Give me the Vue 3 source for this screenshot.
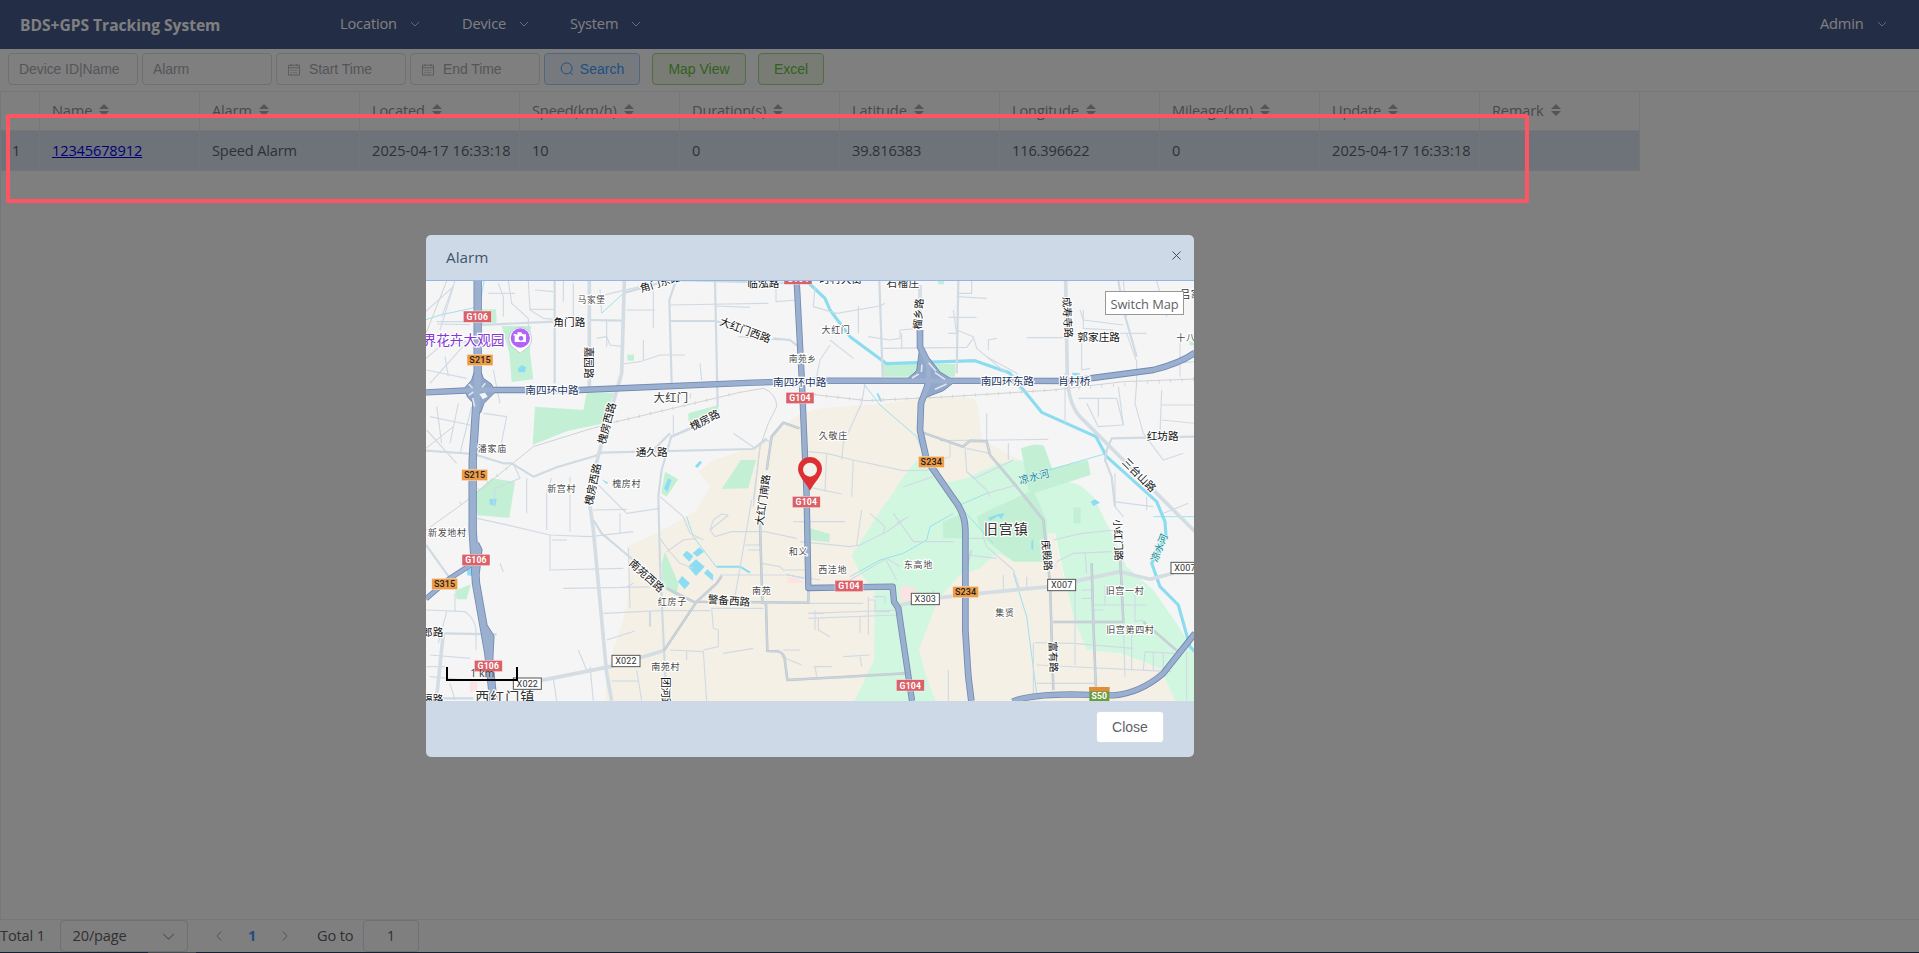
<script setup>
const menus = [
  { label: 'Location', cls: 'm1' },
  { label: 'Device', cls: 'm2' },
  { label: 'System', cls: 'm3' },
]
const columns = ['', 'Name', 'Alarm', 'Located', 'Speed(km/h)', 'Duration(s)', 'Latitude', 'Longitude', 'Mileage(km)', 'Update', 'Remark']
const row = ['1', '12345678912', 'Speed Alarm', '2025-04-17 16:33:18', '10', '0', '39.816383', '116.396622', '0', '2025-04-17 16:33:18', '']

// Map geometry: three map units per CSS pixel.
const parks = [
  'M345 530L490 540L500 488L582 488L552 580L440 604L338 645Z',
  'M185 238L228 238L230 278L185 282Z',
  'M245 288L333 288L330 365L340 448L275 456L268 370Z',
  'M215 745L285 755L268 864L172 856L165 790Z',
  'M735 725L775 748L740 800L724 790Z',
  'M962 690L1008 690L985 775L905 777Z',
  'M805 550L895 525L895 570L805 574Z',
  'M622 374H642V392H622Z',
  'M735 965L775 1060L770 1098L728 1070L725 1000Z',
  'M105 1082L152 1063L140 1108L110 1108Z',
  'M1170 895L1230 912L1228 937L1165 930Z',
  'M1388 402L1605 402L1605 440L1388 440Z',
  'M1553 150H1572V163H1555Z',
  'M1803 655Q1850 636 1872 648L1896 715L2004 690L2012 735L1840 790L1825 780Z',
  'M1670 860L1720 835L1840 780L1880 870L1880 995L1780 995L1690 925Z',
  'M1568 875L1630 850V925H1570Z',
  'M1960 832H1982V880H1960Z',
  'M2308 335H2325V346H2308Z',
]
const waters = [
  'M295 415L305 405L318 412L315 427L295 427Z',
  'M825 708L840 692L846 698L832 714Z',
  'M745 745L755 750L742 785L732 775Z',
  'M545 748L565 758L560 762Z',
  'M788 975L800 962L820 978L808 995Z',
  'M818 970L838 952L852 965L832 980Z',
  'M804 1010L828 988L854 1010L828 1038Z',
  'M774 1055L786 1038L810 1060L794 1078Z',
  'M852 1030L862 1018L880 1035L878 1052Z',
  'M208 808L230 806L226 828L210 824Z',
  'M140 1015L158 1018L158 1038L142 1036Z',
  'M2012 815L2025 808L2040 818L2020 828Z',
  'M1704 863L1735 852L1754 850L1744 868L1735 858L1710 872Z',
  'M1834 935L1840 928V962L1834 955Z',
  'M1958 428L1980 430L1976 438L1955 434Z',
]
const hospitals = ['M1440 1070L1485 1070L1488 1112L1440 1112Z', 'M1100 1042L1130 1042L1155 1058L1104 1060Z', 'M150 1355H172V1385H150Z', 'M1900 1000H1912V1015H1900Z']
const minor = [
  'M0 260L100 170', 'M105 153L65 260', 'M50 275H170', 'M52 282L150 284', 'M100 170L60 300', 'M205 190H285', 'M235 160L250 200V260', 'M265 153L275 220L325 265V310',
  'M325 153L330 240L370 265L405 268', 'M330 238H405', 'M345 180L400 185', 'M430 153V215', 'M460 160V260', 'M540 178L545 250', 'M530 200L660 170', 'M700 153V295', 'M620 240H705',
  'M750 225L1045 220', 'M885 228L990 232', 'M1068 153V215L1130 210', 'M1000 160L1065 170', 'M955 320L1080 330', 'M560 270V350', 'M530 325L560 320L570 345L610 350', 'M610 402L660 395L720 375H795',
  'M670 330V390', 'M18 385L60 350L160 330', 'M75 380L85 440', 'M30 460L155 320', 'M20 420L140 445', 'M50 530L65 640', 'M115 520L90 640', 'M155 530L120 670', 'M190 550L260 560L240 660', 'M30 560L150 585', 'M220 420L240 520',
  'M20 600L110 700', 'M760 555V615L840 580', 'M810 505L812 490', 'M940 610L1005 655', 'M1005 655L1040 630L1055 640', 'M840 400L845 450', 'M280 700L300 745L225 775L220 830',
  'M320 745V850', 'M395 745L380 780V900', 'M450 740V905', 'M510 740L620 850L720 835', 'M600 850V910', 'M520 840L620 838', 'M172 865L240 880L390 915L510 920L640 905', 'M390 915V1020L610 1015', 'M240 1000L250 1025', 'M430 1075L620 1072L640 1060',
  'M395 930H440', 'M550 1150L720 1142H870', 'M560 1230L645 1203', 'M475 1260L500 1320', 'M18 1140L135 1145Q165 1165 168 1200V1260', 'M30 1275L150 1285', 'M105 1090V1145', 'M80 1145L55 1240', 'M30 1340L140 1350', 'M90 1360L105 1410', 'M20 1310H75',
  'M400 1345L410 1412', 'M510 1310L520 1412', 'M575 1353H655', 'M650 1320L665 1412', 'M750 1260L850 1265L860 1412', 'M850 1260L895 1250V1200L880 1195L875 1135H1030',
  'M800 1265V1290', 'M625 955L630 1135', 'M600 1072L730 1070', 'M720 925L745 960L780 1000L820 1015', 'M740 965L790 930L830 925', 'M720 800L790 860L810 910L850 930', 'M870 900L925 855M870 900L885 920L935 905L1035 905L1130 925', 'M925 855L905 852L880 870L870 900',
  'M975 945H1020', 'M985 960H1025', 'M1025 1000L1080 1010L1090 1020H1160', 'M995 810L945 1100', 'M1020 650L1000 830', 'M1090 1260H1140', 'M1120 875H1165', 'M900 1035H1100L1200 1050', 'M1085 1280L1145 1305', 'M1165 1150H1210', 'M1185 1140V1200', 'M910 1270L1000 1255',
  'M1165 665L1220 670L1300 690L1450 722L1560 720', 'M1220 670L1215 785', 'M1300 690L1295 800', 'M1160 770L1265 792', 'M1265 690L1270 640L1325 520L1335 460', 'M1185 170L1180 230L1250 250L1380 228L1395 220', 'M1315 228V310', 'M1230 345L1200 390L1190 440', 'M1230 330L1300 385', 'M1410 330L1440 325L1440 300L1500 295',
  'M1445 310V355', 'M1390 355L1640 352L1660 325', 'M1345 320L1410 330', 'M1610 200L1700 205', 'M1585 262H1670', 'M1615 190H1655V153', 'M1610 300L1660 320L1670 355L1760 430', 'M1585 310H1610L1600 240', 'M1705 360V330L1730 325', 'M1700 380L1790 430L1800 480', 'M1820 323H1935', 'M1980 240L1990 270L2110 285', 'M1990 240V295L2080 300', 'M1985 310V420L2010 415', 'M2110 153L2120 260', 'M2180 310L2100 310', 'M1935 430V580', 'M1700 550V630', 'M1560 632L1885 628', 'M2120 310L2150 395V460L2145 520L2170 610', 'M2095 470L2110 585', 'M1975 505L2090 505L2110 585L2035 590L2000 520', 'M2035 505V560', 'M2225 480L2220 610', 'M2225 525H2325', 'M2225 570L2325 580', 'M2170 610L2230 690L2290 670', 'M2250 400L2325 395', 'M2210 153L2240 260', 'M2280 320V440',
  'M1635 650L1640 725L1700 780L1710 800M1640 655L1710 670', 'M1640 725L1665 745L1780 690', 'M1590 640V680L1560 690', 'M1765 640V690', 'M1700 790L1790 765', 'M1140 875H1275', 'M1140 935L1290 950L1320 945L1400 905L1450 870', 'M1325 840L1310 945', 'M1350 850L1395 890L1390 910', 'M1420 850L1480 935H1600', 'M1430 880L1465 860',
  'M1290 1050L1400 985L1440 1010', 'M1395 985L1430 1050', 'M1540 1080V1110', 'M1165 1150L1440 1140M1165 1165L1430 1155', 'M1165 1120H1330', 'M1195 1165V1200L1230 1220', 'M1345 1100V1215M1360 1100H1395V1120M1345 1110H1365V1145H1410', 'M1320 1160V1210', 'M1270 1280L1350 1275', 'M1320 1280L1325 1310', 'M1185 1310L1190 1340M1180 1310H1235',
  'M1645 925H1690L1700 950L1780 1020L1800 1080', 'M1645 975L1730 985', 'M1750 1035V1080', 'M1820 1040V1080', 'M1900 930L1985 910L2085 900', 'M1910 995L1960 970L2075 965', 'M1995 965L2000 1030', 'M1965 1060V1305', 'M1985 1080H2015M1985 1105H2015M2015 1125L2180 1125M2055 1065V1125M2145 1065V1175L2170 1170', 'M2085 730V830L2110 860', 'M2015 1140H2050', 'M1845 1238L1960 1240L2140 1255', 'M1850 1305L2255 1325', 'M1840 1238V1412', 'M1850 1360H2030', 'M2110 1180L2115 1340', 'M2135 1190V1320', 'M2175 1265L2170 1320M2200 1265V1320M2230 1265V1320M2175 1265L2265 1270', 'M2080 815L2200 830', 'M2230 850L2305 820', 'M2180 800V840', 'M2300 1265V1412', 'M1585 1320V1412', 'M1450 770L1540 740',
]
const medium = [
  'M185 285L400 275', 'M404 153V460', 'M508 270L610 272', 'M750 273H885L930 285', 'M1060 325L1110 330L1135 350', 'M885 153L893 530', 'M755 460L748 210L765 160', 'M615 188L750 150L1130 160', 'M18 662L160 672L250 700L275 700L340 740L410 712L525 678L545 668L1000 657L1040 625', 'M755 615L725 720L715 800L720 1000L732 1260L740 1412',
  'M755 620L895 560', 'M18 945L90 1045', 'M520 870L545 910L640 990', 'M690 1145V1190', 'M70 1210L230 1213', 'M18 1405H160', 'M1378 153L1388 440', 'M1615 153L1610 430', 'M2095 153L2110 240L2150 380', 'M2325 620L2075 625L2060 660L2055 690L2075 740L2085 830', 'M1640 1010L1655 960', 'M700 660L750 610',
]
const trunk = [
  'M508 153V470', 'M613 153L605 430L545 640L505 790L520 900L560 1330L575 1412', 'M360 1352L570 1310L730 1262', 'M70 1210L50 1400', 'M1937 153L1942 440Q1945 520 1980 560L2080 660L2210 790L2325 905', 'M1440 1125L1540 1105L1680 1090L1800 1078L1890 1070L2100 1025L2190 1048L2260 1030', 'M1500 165V260',
]
const secondary = [
  'M732 1262L830 1115L890 1060L905 1038', 'M740 1075L820 1115L1165 1118L1166 1080', 'M1020 880L1027 1118L1038 1120L1042 1263L1075 1264Q1095 1270 1095 1295L1102 1350L1280 1340L1460 1330', 'M1500 605L1628 650L1650 632L1700 634L1710 675L1790 770L1870 870L1890 1060L1900 1380', 'M1900 1176H2110L2100 970', 'M2015 1000L2020 1180L2028 1380', 'M1138 595L1090 578L1055 620L1040 720', 'M2170 1175L2280 1270',
]
const highway = [
  { w: 14, d: 'M18 487L170 480L480 480L1000 458L1200 452L1950 453L2200 420Q2280 400 2325 368' },
  { w: 20, d: 'M173 153L173 460L158 690V900L168 1060L205 1270L220 1412' },
  { w: 14, d: 'M168 940L178 960L170 1030M195 1190L214 1220L210 1300' },
  { w: 11, d: 'M18 1106L90 1045L160 1000' },
  { w: 14, d: 'M1130 153L1145 440L1160 800L1165 1074L1418 1070L1422 1115L1435 1135L1476 1412' },
  { w: 15, d: 'M1500 300V350L1525 400L1525 460L1503 520L1500 600L1520 690L1600 805Q1636 850 1636 900V1200L1645 1340L1654 1412' },
  { w: 14, d: 'M1778 1415Q1820 1395 1950 1393L2080 1396Q2160 1390 2230 1330L2325 1210' },
]
const junction = [
  'M163 425L155 450L134 474L142 500L160 520L165 548L182 548L192 520L226 486L214 462L190 445L183 425Z',
  'M1498 362L1490 422L1464 445L1515 458L1510 505L1536 495L1570 482L1606 454L1560 426L1528 385Z',
]
const labels = [
  ['马家堡', 515, 209, 26, 0, 's'], ['角门东路', 720, 158, 31, -17], ['临泓路', 1030, 158, 32, 0], ['时村大街', 1262, 148, 32, 0], ['石榴庄', 1449, 160, 32, 0, 'n'],
  ['角门路', 448, 277, 32, 0], ['嘉园路', 508, 398, 32, 90], ['大红门西路', 976, 300, 32, 20], ['南苑乡', 1148, 385, 26, 0, 's'], ['大红门', 1248, 300, 27, 0, 's'],
  ['南四环中路', 396, 481, 32, 0, 'b'], ['南四环中路', 1139, 457, 32, 0, 'b'], ['南四环东路', 1762, 452, 32, 0, 'b'], ['肖村桥', 1963, 454, 32, 0, 'b'], ['大红门', 753, 502, 34, 0, 'n'],
  ['榴乡路', 1495, 252, 31, -86], ['成寿寺路', 1943, 262, 31, 87], ['郭家庄路', 2036, 321, 32, 0], ['吕家', 2312, 192, 32, 0, 'n'], ['十八', 2298, 322, 27, 0, 's'],
  ['槐房西路', 560, 580, 32, -75], ['槐房西路', 518, 763, 32, -78], ['槐房路', 854, 570, 32, -27], ['通久路', 695, 665, 32, 0], ['潘家庙', 217, 657, 27, 0, 's'], ['新宫村', 425, 777, 27, 0, 's'], ['槐房村', 620, 762, 27, 0, 's'],
  ['久敬庄', 1240, 616, 27, 0, 's'], ['红坊路', 2228, 618, 32, 0], ['三台山路', 2158, 735, 32, 45], ['凉水河', 1842, 740, 31, -15, 'w'], ['凉水河', 2217, 953, 29, -68, 'w'],
  ['新发地村', 82, 908, 27, 0, 's'], ['大红门南路', 1028, 810, 31, -82], ['和义', 1135, 965, 27, 0, 's'], ['西洼地', 1238, 1020, 27, 0, 's'], ['南苑', 1025, 1083, 27, 0, 's'], ['南苑西路', 680, 1037, 32, 42],
  ['红房子', 757, 1116, 27, 0, 's'], ['警备西路', 927, 1112, 32, 4], ['郎路', 38, 1207, 32, 0], ['福路', 38, 1406, 32, 0], ['南苑村', 737, 1311, 27, 0, 's'], ['团河路', 737, 1388, 31, 90], ['西红门镇', 256, 1401, 42, 0, 't'],
  ['东高地', 1495, 1005, 27, 0, 's'], ['旧宫镇', 1759, 895, 42, 0, 't'], ['庑殿路', 1881, 976, 31, 85], ['小红门路', 2095, 930, 31, 88], ['旧宫一村', 2115, 1083, 27, 0, 's'], ['旧宫第四村', 2131, 1199, 27, 0, 's'], ['集贤', 1755, 1149, 27, 0, 's'], ['富有路', 1900, 1281, 31, 88],
  ['世界花卉大观园', 110, 330, 41, 0, 'p'],
]
const shields = [
  ['G106', 172, 260, 'r'], ['S215', 180, 390, 'o'], ['S215', 164, 735, 'o'], ['G104', 1134, 146, 'r'], ['G104', 1140, 504, 'r'], ['S234', 1534, 696, 'o'],
  ['G104', 1159, 816, 'r'], ['G106', 168, 990, 'r'], ['S315', 74, 1062, 'o'], ['G106', 205, 1308, 'r'], ['X022', 322, 1361, 'x'], ['X022', 618, 1293, 'x'],
  ['G104', 1287, 1068, 'r'], ['X303', 1516, 1107, 'x'], ['S234', 1637, 1086, 'o'], ['X007', 1925, 1065, 'x'], ['X007', 2295, 1014, 'x'], ['G104', 1471, 1366, 'r'],
]
</script>

<template>
  <div class="page">
    <header class="topbar">
      <div class="brand">BDS+GPS Tracking System</div>
      <nav class="menu">
        <div v-for="m in menus" :key="m.label" class="menu-item" :class="m.cls">
          <span>{{ m.label }}</span>
          <svg class="chev" viewBox="0 0 10 10"><path d="M1 3L5 7L9 3" /></svg>
        </div>
      </nav>
      <div class="menu-item admin">
        <span>Admin</span>
        <svg class="chev" viewBox="0 0 10 10"><path d="M1 3L5 7L9 3" /></svg>
      </div>
    </header>

    <div class="filters">
      <div class="input">Device ID|Name</div>
      <div class="input">Alarm</div>
      <div v-for="t in ['Start Time', 'End Time']" :key="t" class="input date">
        <svg viewBox="0 0 14 14"><path d="M.5 2H13.5V13.5H.5ZM.5 5H13.5M3.5 .5V3M10.5 .5V3" /><path class="dots" d="M3 8H11M3 10.7H11" /></svg>
        <span>{{ t }}</span>
      </div>
      <button class="btn search">
        <svg viewBox="0 0 14 14"><circle cx="6.6" cy="6.4" r="5.5" /><path d="M10.4 10.4L12.6 12.8" /></svg>
        <span>Search</span>
      </button>
      <button class="btn green mapview">Map View</button>
      <button class="btn green excel">Excel</button>
    </div>

    <main class="table">
      <div class="tr head">
        <div v-for="(c, i) in columns" :key="i" class="td">
          <template v-if="c">
            <span>{{ c }}</span>
            <svg class="sort" viewBox="0 0 10 12"><path d="M0 5L5 0L10 5ZM0 7L5 12L10 7Z" /></svg>
          </template>
        </div>
      </div>
      <div class="tr body">
        <div v-for="(c, i) in row" :key="i" class="td">
          <a v-if="i === 1" href="#">{{ c }}</a>
          <span v-else>{{ c }}</span>
        </div>
      </div>
    </main>

    <footer class="pager">
      <span class="total">Total 1</span>
      <div class="select"><span>20/page</span><svg viewBox="0 0 12 12"><path d="M1 3.5L6 8.5L11 3.5" /></svg></div>
      <svg class="arrow prev" viewBox="0 0 12 12"><path d="M8 1.5L4 6L8 10.5" /></svg>
      <b class="current">1</b>
      <svg class="arrow next" viewBox="0 0 12 12"><path d="M4 1.5L8 6L4 10.5" /></svg>
      <span class="goto">Go to</span>
      <div class="jump">1</div>
    </footer>
    <div class="strip"><i></i></div>

    <div class="overlay">
      <section class="dialog">
        <div class="dialog-head">
          <span>Alarm</span>
          <svg viewBox="0 0 10 10"><path d="M.5 .5L9.5 9.5M9.5 .5L.5 9.5" /></svg>
        </div>
        <div class="map">
          <svg class="canvas" viewBox="18 153 2304 1260" preserveAspectRatio="none">
            <path class="urban" d="M1075 600L1140 552L1200 535L1410 520L1520 500L1660 505L1672 520L1685 628L1800 690L1900 910L1960 1160L2000 1260L2090 1270L2220 1315L2270 1420H555L560 1320L600 1200L620 1130L630 1000L620 950L720 905L830 840L870 770L835 725L880 690L960 665L1030 640Z" />
            <path class="field" d="M1490 690L1450 740L1405 810L1395 820L1350 890L1295 975L1320 1030L1365 1080L1362 1290L1300 1420H1550L1515 1330L1497 1255L1520 1200L1550 1120L1580 1080L1620 1035L1680 1015L1730 970L1780 990L1880 995L1885 910L1905 910L1960 1160L2000 1260L2100 1270L2220 1315L2270 1420H2325V1270L2270 1180L2200 1080L2120 1010L2070 900L2020 800L1980 765L1890 740L1800 690L1740 700L1680 725L1640 745L1570 760Z" />
            <path v-for="(d, i) in parks" :key="'p' + i" class="park" :d="d" />
            <path v-for="(d, i) in hospitals" :key="'h' + i" class="hospital" :d="d" />
            <path v-for="(d, i) in waters" :key="'w' + i" class="water" :d="d" />
            <path class="river r3" d="M0 275L60 255L155 235L180 225L192 153M545 250L610 190M800 860L820 920L890 1012M1330 460L1380 525L1490 620L1530 720L1620 830L1720 940M1290 1040L1380 990L1450 970L1520 930L1530 890L1600 850M1780 1030L1820 1160L1850 1390M1870 725L2060 670M2200 860H2325M1620 825L1700 790M1100 1033L1150 1045" />
            <path class="river r8" d="M890 1010L960 1010L990 1028M1372 490L1384 515" />
            <path class="river r12" d="M1160 153L1215 205L1230 240L1290 320L1400 401L1665 392L1768 428L1865 547L2028 620L2060 680L2210 815L2235 875L2238 920L2195 1000L2220 1070L2275 1125L2310 1250L2325 1265" />
            <path class="rail" d="M18 655L100 590M18 900L130 820L340 650L500 600L590 575L960 487L1030 475Q1070 490 1070 530L1045 580L1020 650L1000 810M1150 490L1340 512L1590 500L1900 480L2110 455L2325 447M80 153L18 310" />
            <path class="tick" d="M120 820L280 700M590 575L960 487M1150 490L1340 512L1590 500L1900 480L2325 447" />
            <path v-for="(d, i) in minor" :key="'m' + i" class="road minor" :d="d" />
            <path v-for="(d, i) in medium" :key="'d' + i" class="road medium" :d="d" />
            <path v-for="(d, i) in trunk" :key="'t' + i" class="road trunk" :d="d" />
            <path v-for="(d, i) in secondary" :key="'sc' + i" class="road sec-case" :d="d" />
            <path v-for="(d, i) in secondary" :key="'sf' + i" class="road sec" :d="d" />
            <path v-for="(h, i) in highway" :key="'hc' + i" class="road hw-case" :d="h.d" :stroke-width="h.w + 5" />
            <path v-for="(d, i) in junction" :key="'j' + i" class="junction" :d="d" />
            <path v-for="(h, i) in highway" :key="'hf' + i" class="road hw" :d="h.d" :stroke-width="h.w" />
            <path class="ramp" d="M146 462L158 474M196 460L186 472M146 496L160 486M158 504L164 530M1496 432L1476 444M1545 428L1575 448M1545 478L1580 462M1506 404L1504 426M1526 398L1548 424" />
            <path class="island" d="M178 492L195 488L203 500L188 508Z" />

            <text v-for="(l, i) in labels" :key="'l' + i" :class="['label', l[5]]" :font-size="l[3]" :transform="`translate(${l[1]} ${l[2]}) rotate(${l[4]})`" dy="0.37em">{{ l[0] }}</text>
            <g v-for="(s, i) in shields" :key="'s' + i" :class="['shield', s[3]]" :transform="`translate(${s[1]} ${s[2]})`">
              <rect :x="s[3] === 'o' ? -39 : -42" y="-17" :width="s[3] === 'o' ? 78 : 84" height="34" />
              <text y="10">{{ s[0] }}</text>
            </g>
            <g class="shield e" transform="translate(2038 1397)">
              <rect x="-30" y="-26" width="60" height="42" />
              <rect class="cap" x="-30" y="-26" width="60" height="13" />
              <text y="9">S50</text>
            </g>

            <g class="poi">
              <path class="poi-ring" d="M301 370L284 356A34 34 0 1 1 318 356Z" />
              <circle class="poi-disc" cx="301" cy="324" r="29" />
              <path class="poi-cam" d="M284 319V336H318V313H308L304 307H295L293 313" />
              <circle class="poi-disc" cx="303" cy="325" r="7" />
              <path class="poi-cam" d="M281 312H290V317H281ZM292 307h5v4h-5z" />
            </g>
            <g class="pin">
              <path d="M1170 782C1156 755 1134 738 1134 716A36 35 0 1 1 1206 716C1206 738 1184 755 1170 782Z" />
              <circle cx="1170" cy="719" r="21" />
            </g>
            <path class="scale" d="M81 1311V1350H291V1311" />
            <text class="scale-text" x="187" y="1341">1 km</text>
          </svg>
          <button class="switch">Switch Map</button>
        </div>
        <div class="dialog-foot"><button class="close">Close</button></div>
      </section>
    </div>
    <div class="highlight"></div>
  </div>
</template>

<style>
body { overflow: hidden; }
</style>
<style scoped>
* { box-sizing: border-box; }
.page { position: relative; width: 1919px; height: 953px; overflow: hidden; display: flex; flex-direction: column; background: #fff; color: #606266; font-family: "Open Sans", "Noto Sans", sans-serif; font-size: 14.6px; letter-spacing: -.15px; }
svg { fill: none; stroke: currentColor; flex: none; }
button { font: inherit; letter-spacing: 0; padding: 0; }
.topbar { height: 49px; flex: none; background: #465b8d; color: #fff; display: flex; align-items: center; padding-left: 20px; padding-right: 32px; }
.brand { width: 320px; font-weight: 700; font-size: 15.6px; letter-spacing: -.02px; white-space: nowrap; }
.menu { display: flex; flex: 1; }
.menu-item { display: flex; align-items: center; justify-content: space-between; padding-bottom: 3px; }
.chev { position: relative; top: 1px; }
.m1 { width: 80px; margin-right: 42px; }
.m2 { width: 67px; margin-right: 41px; }
.m3 { width: 71px; }
.admin { width: 67px; }
.chev { width: 10px; height: 10px; stroke-width: .9; opacity: .8; }
.filters { height: 42px; flex: none; display: flex; align-items: flex-start; gap: 4px; padding: 4px 8px; font: 14px "Liberation Sans", Arial, sans-serif; letter-spacing: -.08px; }
.input { width: 130px; height: 32px; border: 1px solid #dcdfe6; border-radius: 4px; padding-left: 10px; line-height: 31px; color: #a8abb2; white-space: nowrap; }
.date { display: flex; align-items: center; padding-left: 11px; }
.date svg { width: 12px; height: 13px; margin-right: 9px; }
.dots { stroke-dasharray: 1.6 1.2; }
.btn { height: 32px; border: 1px solid; border-radius: 4px; display: flex; align-items: center; justify-content: center; }
.search { width: 96px; color: #409eff; background: #ecf5ff; border-color: #a0cfff; gap: 6px; }
.search svg { width: 14px; height: 14px; }
.green { color: #67c23a; background: #f0f9eb; border-color: #a4da89; }
.mapview { width: 94px; margin-left: 8px; }
.excel { width: 66px; margin-left: 8px; }
.table { height: 829px; flex: none; border: 1px solid #ebeef5; border-right: 0; }
.tr { width: 1639px; display: grid; grid-template-columns: 39px repeat(10, 160px); height: 39px; }
.td { border-right: 1px solid #ebeef5; border-bottom: 1px solid #ebeef5; padding: 0 0 2px 12px; display: flex; align-items: center; white-space: nowrap; gap: 7px; }
.td:first-child { padding-left: 11px; }
.head { color: #909399; }
.body { height: 40px; background: #dce6f4; }
.body .td:nth-child(4), .body .td:nth-child(10) { letter-spacing: .05px; }
.body .td { border-color: #e4e9f0; }
.sort { width: 10px; height: 12px; fill: #a8abb2; stroke: none; }
a { color: #0000ee; }
.pager { height: 32px; flex: none; display: flex; align-items: center; }
.pager span, .current { position: relative; top: -1px; }
.total { width: 60px; }
.select { width: 128px; height: 32px; border: 1px solid #dcdfe6; border-radius: 4px; display: flex; align-items: center; justify-content: space-between; padding: 0 12px 0 11.5px; }
.select svg { width: 13px; height: 13px; stroke: #a8abb2; }
.arrow { width: 12px; height: 12px; stroke: #a8abb2; }
.prev { margin-left: 25px; }
.current { width: 54px; text-align: center; color: #409eff; }
.goto { margin-left: 26px; width: 46px; }
.jump { width: 56px; height: 32px; border: 1px solid #dcdfe6; border-radius: 4px; text-align: center; line-height: 30px; font-size: 14px; }
.strip { height: 1px; background: #2b4260; flex: none; position: relative; }
.strip i { display: block; width: 48px; height: 1px; margin-left: 148px; background: #8d97a5; }
.overlay { position: absolute; inset: 0; background: rgba(0, 0, 0, .5); }
.dialog { width: 768px; height: 522px; margin: 235px 0 0 426px; background: #cdd9e7; border-radius: 5px; overflow: hidden; display: flex; flex-direction: column; }
.dialog-head { height: 46px; border-bottom: 1px solid #8fb8e8; display: flex; align-items: center; justify-content: space-between; padding: 0 13px 2px 20px; font-size: 15.3px; letter-spacing: 0; color: #44556a; }
.dialog-head svg { width: 9px; height: 9px; margin-bottom: 2px; color: #33425a; }
.map { position: relative; height: 420px; }
.canvas { display: block; width: 768px; height: 420px; stroke: none; background: #f5f5f5; }
.switch { position: absolute; top: 10px; right: 10px; width: 79px; height: 24px; border: 1px solid #999; background: #fff; color: #606266; font-size: 12.9px; letter-spacing: -.1px; padding-top: 2px; line-height: 18px; white-space: nowrap; }
.dialog-foot { display: flex; justify-content: flex-end; padding: 11px 31px 0 0; }
.close { width: 66px; height: 30px; border: 0; border-radius: 3px; background: #fff; color: #606266; font: 14px "Liberation Sans", Arial, sans-serif; box-shadow: 0 0 0 .5px #dcdfe6; }
.highlight { position: absolute; left: 6px; top: 114px; width: 1523px; height: 89px; border: 4px solid #ff5562; border-radius: 3px; }

.urban { fill: #f4f0e5; }
.field { fill: #d2f7e0; }
.park { fill: #c3f0d5; }
.hospital { fill: #fbe3e3; }
.water { fill: #8cdcf2; }
.river { fill: none; stroke: #8cdcf0; stroke-linejoin: round; }
.r3 { stroke-width: 2.5; }
.r8 { stroke-width: 6; }
.r12 { stroke-width: 9.5; }
.rail { fill: none; stroke: #d0d2d4; stroke-width: 3; }
.tick { fill: none; stroke: #d0d2d4; stroke-width: 10; stroke-dasharray: 2.5 32; }
.road { fill: none; stroke-linejoin: round; }
.minor { stroke: #d0dae4; stroke-width: 3.4; }
.medium { stroke: #cfdae2; stroke-width: 6.5; }
.trunk { stroke: #d3dde3; stroke-width: 11; }
.sec-case { stroke: #b8c2cc; stroke-width: 7.5; }
.sec { stroke: #ccd5dd; stroke-width: 4.5; }
.hw-case { stroke: #7189b3; }
.hw { stroke: #9bafcf; }
.junction { fill: #91a8ca; stroke: #718bb7; stroke-width: 3; }
.ramp { fill: none; stroke: #dfe5ec; stroke-width: 5; }
.island { fill: #f5f5f5; }
.label { font-family: "Noto Sans CJK SC", sans-serif; font-weight: 400; text-anchor: middle; letter-spacing: 0; fill: #111; stroke: #fff; stroke-width: 7; stroke-linejoin: round; paint-order: stroke; }
.label.s { fill: #4a4a4a; letter-spacing: 2px; }
.label.n { fill: #333; letter-spacing: 1px; }
.label.b { fill: #20345f; }
.label.w { fill: #14869b; stroke: #e0f7ee; stroke-width: 4; }
.label.t { fill: #333; letter-spacing: 3px; }
.label.p { fill: #8436d6; }
.shield text { font: 500 27px Roboto, "Liberation Sans", sans-serif; letter-spacing: .5px; text-anchor: middle; fill: #fff; }
.shield rect { stroke: #fff; stroke-opacity: .6; stroke-width: 2; }
.r rect { fill: #db6068; }
.r text, .e text { font-weight: 700; font-size: 26px; }
.o rect { fill: #ee9c46; }
.o text { fill: #222; }
.x rect { fill: #fff; stroke: #555; stroke-opacity: 1; stroke-width: 3; }
.x text { fill: #333; font-weight: 400; }
.e rect { fill: #6a9d40; stroke: none; }
.e .cap { fill: #e58a39; }
.poi-ring { fill: #fff; stroke: #b9b3c5; stroke-width: 2; }
.poi-disc { fill: #b264f8; }
.poi-cam { fill: #fff; }
.pin path { fill: #dd3034; }
.pin circle { fill: #f5f2ec; }
.scale { fill: none; stroke: #000; stroke-width: 6; }
.scale-text { font: 32px "Open Sans", sans-serif; text-anchor: middle; letter-spacing: 0; fill: #444; stroke: none; }
</style>
